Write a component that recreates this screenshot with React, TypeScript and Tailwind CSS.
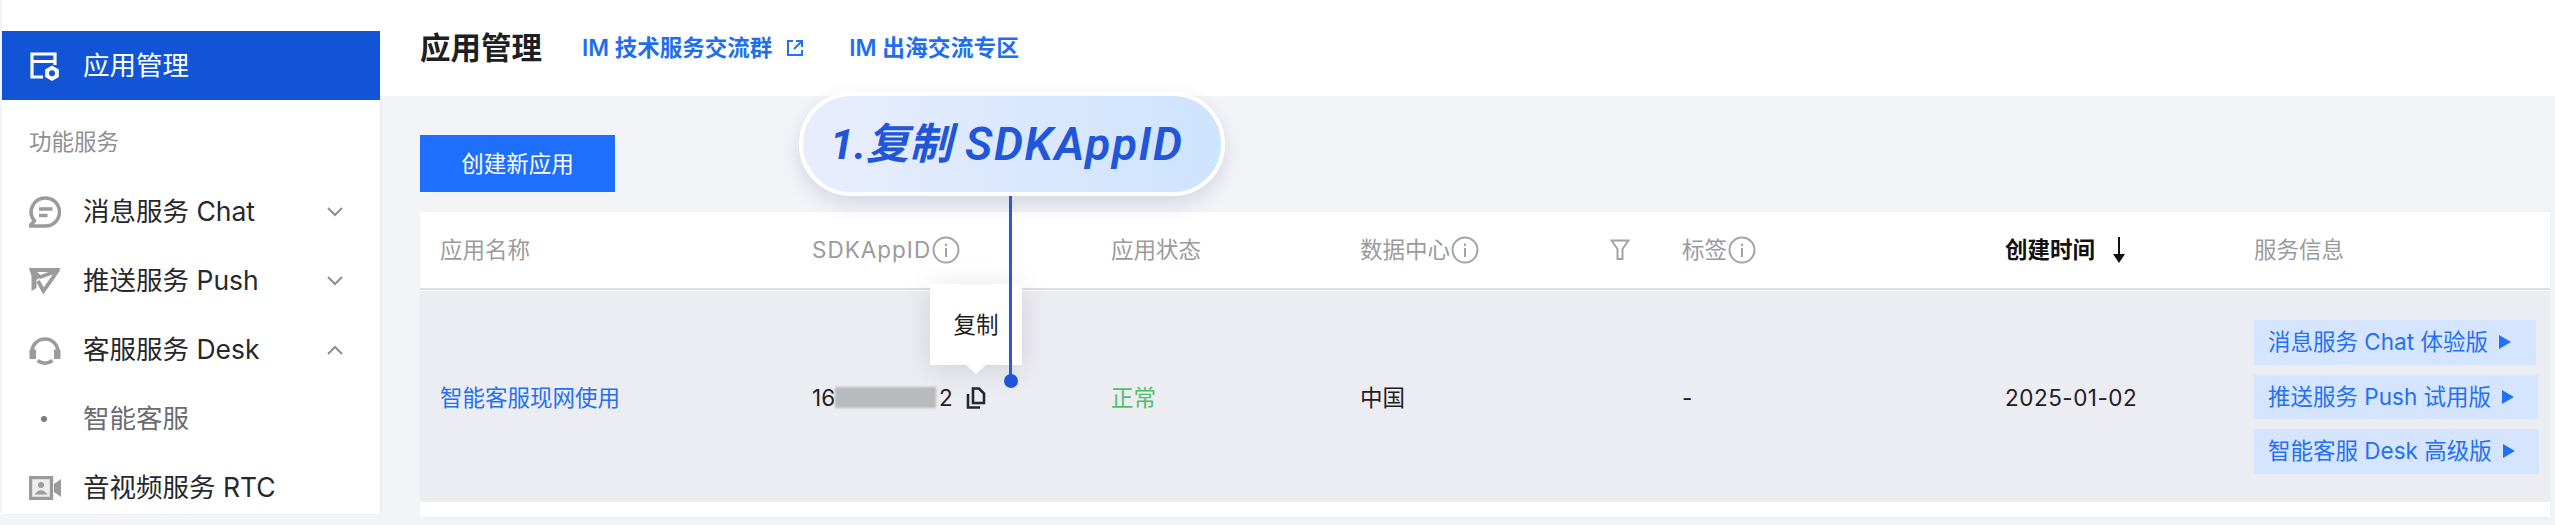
import React from "react";

const G = "#9b9b9b";

function Info() {
  return (
    <svg width="28" height="28" viewBox="0 0 28 28" fill="none" className="shrink-0 ml-[1px]">
      <circle cx="14" cy="14" r="12.5" stroke="#a3a3a3" strokeWidth="2" />
      <rect x="13" y="7.5" width="2" height="2.5" fill="#a3a3a3" />
      <rect x="13" y="12" width="2" height="9" fill="#a3a3a3" />
    </svg>
  );
}

function Chev({ up }: { up?: boolean }) {
  return (
    <svg width="18" height="12" viewBox="0 0 18 12" fill="none" className="ml-auto mr-[36px]">
      <path d={up ? "M2 10 L9 3 L16 10" : "M2 2 L9 9 L16 2"} stroke="#8e8e8e" strokeWidth="2" />
    </svg>
  );
}

function AppIcon() {
  return (
    <svg width="32" height="30" viewBox="0 0 32 30" fill="none" className="shrink-0">
      <path d="M26 14 V3 H3 V26 H14 M3 10.5 H26" stroke="#fff" strokeWidth="3.2" />
      <path d="M23 14.5 L29.8 18.4 V26.1 L23 30 L16.2 26.1 V18.4 Z" fill="#fff" />
      <circle cx="23" cy="22.2" r="3" fill="#1155d6" />
    </svg>
  );
}

function ChatIcon() {
  return (
    <svg width="32" height="32" viewBox="0 0 32 32" fill="none" className="shrink-0">
      <path d="M16.5 2 A14 14 0 1 1 16.5 30 H0.5 L5.5 25 A14 14 0 0 1 16.5 2 Z" stroke={G} strokeWidth="3.6" strokeLinejoin="round" />
      <path d="M10 13 H23.5 M10 19.5 H18.5" stroke={G} strokeWidth="3.6" />
    </svg>
  );
}

function PushIcon() {
  return (
    <svg width="32" height="26" viewBox="0 0 32 26" fill="none" className="shrink-0">
      <path d="M0 0 H32 L28 4 H8 L12.5 8 L7.5 12 V20 L2.5 23 V8 Z" fill={G} />
      <path d="M29.5 1.5 L14.5 23 L9 13 M10 9.5 L25 4" stroke={G} strokeWidth="3.8" />
    </svg>
  );
}

function HeadIcon() {
  return (
    <svg width="32" height="32" viewBox="0 0 32 32" fill="none" className="shrink-0">
      <path d="M3 18 A13 13 0 0 1 29 18" stroke={G} strokeWidth="3.6" />
      <rect x="0.5" y="15.5" width="6.5" height="9.5" fill={G} />
      <rect x="25" y="15.5" width="6.5" height="9.5" fill={G} />
      <path d="M8.5 26.5 Q16 32 23.5 26.5" stroke={G} strokeWidth="3.6" />
    </svg>
  );
}

function VideoIcon() {
  return (
    <svg width="32" height="24" viewBox="0 0 32 24" fill="none" className="shrink-0">
      <rect x="1.5" y="1.5" width="21" height="21" stroke={G} strokeWidth="3.4" fill="#ededed" />
      <circle cx="12" cy="9" r="3" fill={G} />
      <path d="M5.5 18.5 Q12 10 18.5 18.5 Z" fill={G} />
      <path d="M25 8 L32 3 V21 L25 16 Z" fill={G} />
    </svg>
  );
}

function NavRow({ icon, label, chev, sub }: { icon?: React.ReactNode; label: string; chev?: "up" | "down"; sub?: boolean }) {
  return (
    <div className={`h-[69px] flex items-center pl-[27px] text-[26.5px] ${sub ? "text-[#6a6c70]" : "text-[#26282c]"}`}>
      <span className="w-[32px] flex justify-center shrink-0">{icon}</span>
      <span className="ml-[22px] whitespace-nowrap">{label}</span>
      {chev && <Chev up={chev === "up"} />}
    </div>
  );
}

function ServiceBtn({ label, h, w }: { label: string; h: string; w: string }) {
  return (
    <div className={`${h} ${w} bg-[#d6e5ff] flex items-center pl-[14px] text-[22.5px] text-[#2470f5] whitespace-nowrap`}>
      <span>{label}</span>
      <svg width="12" height="14" viewBox="0 0 12 14" className="ml-[11px] shrink-0">
        <path d="M0 0 L12 7 L0 14 Z" fill="#2470f5" />
      </svg>
    </div>
  );
}

export default function App() {
  return (
    <div className="relative w-[2555px] h-[525px] overflow-hidden bg-[#f3f4f8] flex font-['Inter','Noto_Sans_CJK_SC',sans-serif]">
      {/* sidebar */}
      <aside className="ml-[2px] w-[378px] h-[514px] bg-white pt-[31px] overflow-hidden shrink-0 shadow-[1px_0_2px_rgba(0,0,0,0.05)]">
        <div className="h-[69px] bg-[#1155d6] flex items-center pl-[27px] text-[26.5px] text-white">
          <span className="w-[32px] flex justify-center shrink-0"><AppIcon /></span>
          <span className="ml-[22px]">应用管理</span>
        </div>
        <div className="h-[77px] pt-[7px] pl-[27px] flex items-center text-[22.5px] text-[#8f9092]">功能服务</div>
        <NavRow icon={<ChatIcon />} label="消息服务 Chat" chev="down" />
        <NavRow icon={<PushIcon />} label="推送服务 Push" chev="down" />
        <NavRow icon={<HeadIcon />} label="客服服务 Desk" chev="up" />
        <NavRow icon={<span className="block w-[6px] h-[6px] rounded-full bg-[#7d7d7d] mr-[2px]" />} label="智能客服" sub />
        <NavRow icon={<VideoIcon />} label="音视频服务 RTC" />
      </aside>

      {/* main */}
      <main className="flex-1 min-w-0 flex flex-col">
        <header className="h-[96px] bg-white flex items-center pl-[40px]">
          <h1 className="text-[30.5px] font-bold text-[#1d1f22] whitespace-nowrap">应用管理</h1>
          <span className="ml-[40px] text-[22.5px] font-semibold text-[#1e6ff0] whitespace-nowrap">IM 技术服务交流群</span>
          <svg width="18" height="18" viewBox="0 0 18 18" fill="none" className="ml-[14px] shrink-0">
            <path d="M7 2 H2 V16 H16 V11" stroke="#2470f5" strokeWidth="2" />
            <path d="M10 2 H16 V8 M16 2 L8 10" stroke="#2470f5" strokeWidth="2" />
          </svg>
          <span className="ml-[45px] text-[22.8px] font-semibold text-[#1e6ff0] whitespace-nowrap">IM 出海交流专区</span>
        </header>

        <div className="pl-[40px] pr-[5px] pt-[39px]">
          <button className="w-[195px] h-[57px] bg-[#1f6fff] text-white text-[22.5px] flex items-center justify-center">创建新应用</button>

          <div className="mt-[20px] bg-white pb-[15px] shadow-[0_1px_3px_rgba(0,0,0,0.03)]">
            <div className="h-[76px] grid grid-cols-[392px_299px_249px_322px_323px_249px_1fr] items-center text-[22.5px] text-[#9b9b9b] border-b-2 border-[#dcdfe8] box-content">
              <div className="pl-[20px]">应用名称</div>
              <div className="flex items-center"><span className="tracking-[1px]">SDKAppID</span><Info /></div>
              <div>应用状态</div>
              <div className="flex items-center">
                <span>数据中心</span>
                <Info />
                <svg width="20" height="22" viewBox="0 0 20 22" fill="none" className="ml-[131px]">
                  <path d="M1.5 1.5 H18.5 L12.5 10 V20 H7.5 V10 Z" stroke="#a3a3a3" strokeWidth="2" />
                </svg>
              </div>
              <div className="flex items-center">标签<Info /></div>
              <div className="flex items-center font-semibold text-[#111]">
                创建时间
                <svg width="14" height="26" viewBox="0 0 14 26" className="ml-[17px]">
                  <path d="M6 0 H8 V17 H13 L7 26 L1 17 H6 Z" fill="#111" />
                </svg>
              </div>
              <div>服务信息</div>
            </div>

            <div className="mt-[1px] h-[211px] bg-[#ecedf2] grid grid-cols-[392px_299px_249px_322px_323px_249px_1fr] items-center text-[22.5px] text-[#1f2024]">
              <div className="pl-[20px] pt-[2px] text-[#2470f5]">智能客服现网使用</div>
              <div className="flex items-center pt-[2px]">
                <span>16</span>
                <span className="w-[101px] h-[21px] bg-[#b9babd] blur-[1px]" />
                <span className="ml-[3px]">2</span>
                <svg width="20" height="22" viewBox="0 0 20 22" fill="none" className="ml-[13px]">
                  <path d="M7 16 V1.5 H13 L18 6.5 V16 Z" stroke="#27282b" strokeWidth="2.6" />
                  <path d="M2 7 V20.5 H14" stroke="#27282b" strokeWidth="2.6" />
                </svg>
              </div>
              <div className="pt-[2px] text-[#4fbf6b]">正常</div>
              <div className="pt-[2px]">中国</div>
              <div className="pt-[2px]">-</div>
              <div className="pt-[2px] tracking-[0.5px]">2025-01-02</div>
              <div className="flex flex-col gap-[10px]">
                <ServiceBtn label="消息服务 Chat 体验版" h="h-[45px]" w="w-[282px]" />
                <ServiceBtn label="推送服务 Push 试用版" h="h-[44px]" w="w-[284px]" />
                <ServiceBtn label="智能客服 Desk 高级版" h="h-[45px]" w="w-[285px]" />
              </div>
            </div>
          </div>
        </div>
      </main>

      {/* tooltip over the row */}
      <div className="absolute left-[930px] top-[284px] w-[92px] h-[81px] bg-white flex items-center justify-center text-[22.5px] text-[#1f2024] shadow-[0_4px_30px_rgba(0,0,0,0.12)]">
        复制
        <span className="absolute left-[36px] top-[81px] w-0 h-0 border-x-[10px] border-x-transparent border-t-[9px] border-t-white" />
      </div>

      {/* callout */}
      <div className="absolute left-[1009px] top-[194px] w-[3px] h-[187px] bg-[#2a5bd7]" />
      <div className="absolute left-[1004px] top-[374px] w-[14px] h-[14px] rounded-full bg-[#2156d8]" />
      <div className="absolute left-[799px] top-[92px] w-[426px] h-[104px] rounded-full border-[4px] border-white bg-gradient-to-r from-[#e9edfd] to-[#cde4fd] shadow-[0_8px_20px_rgba(60,70,110,0.16)] flex items-center pl-[27px] italic font-bold text-[#2156d8] whitespace-nowrap">
        <span className="text-[43px] font-['Roboto','Noto_Sans_CJK_SC',sans-serif]">1.复制</span>
        <span className="ml-[13px] text-[46px] tracking-[1.6px] font-['Roboto',sans-serif] font-semibold">SDKAppID</span>
      </div>
    </div>
  );
}
